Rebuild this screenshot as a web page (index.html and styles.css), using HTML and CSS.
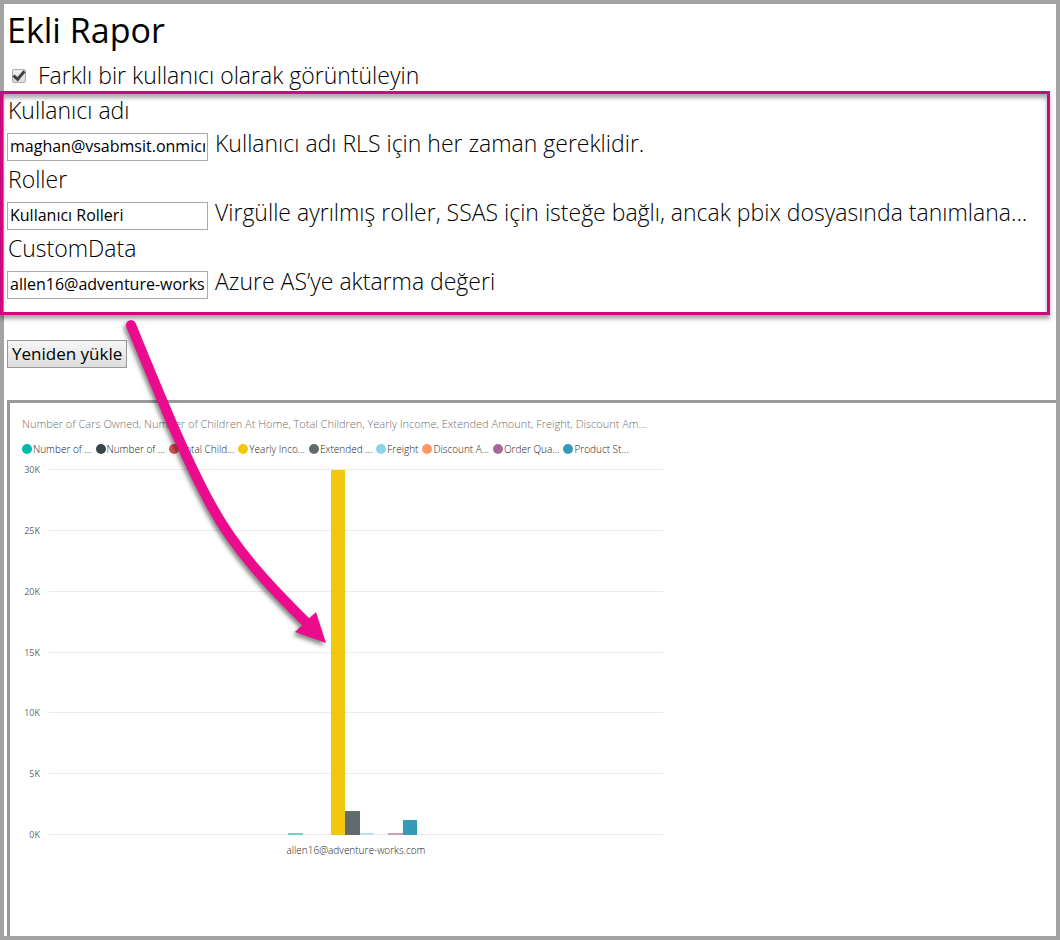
FILE: index.html
```html
<!DOCTYPE html>
<html lang="tr">
<head>
<meta charset="utf-8">
<title>Ekli Rapor</title>
<link rel="stylesheet" href="styles.css">
</head>
<body>
<main class="page">
  <h1 class="title">Ekli Rapor</h1>
  <label class="toggle"><input class="toggle-box" type="checkbox" checked><span>Farklı bir kullanıcı olarak görüntüleyin</span></label>

  <section class="identity">
    <label class="label" for="user">Kullanıcı adı</label>
    <div class="row">
      <input class="field" id="user" type="text" value="maghan@vsabmsit.onmicrosoft.com">
      <span class="hint">Kullanıcı adı RLS için her zaman gereklidir.</span>
    </div>
    <label class="label" for="roles">Roller</label>
    <div class="row">
      <input class="field" id="roles" type="text" value="Kullanıcı Rolleri">
      <span class="hint">Virgülle ayrılmış roller, SSAS için isteğe bağlı, ancak pbix dosyasında tanımlana...</span>
    </div>
    <label class="label" for="custom">CustomData</label>
    <div class="row">
      <input class="field" id="custom" type="text" value="allen16@adventure-works.com">
      <span class="hint">Azure AS’ye aktarma değeri</span>
    </div>
  </section>

  <button class="reload" type="button">Yeniden yükle</button>

  <section class="report">
    <h2 class="chart-title">Number of Cars Owned, Number of Children At Home, Total Children, Yearly Income, Extended Amount, Freight, Discount Am...</h2>
    <ul class="legend">
      <li class="key teal">Number of ...</li>
      <li class="key dark">Number of ...</li>
      <li class="key red">Total Child...</li>
      <li class="key yellow">Yearly Inco...</li>
      <li class="key gray">Extended ...</li>
      <li class="key sky">Freight</li>
      <li class="key orange">Discount A...</li>
      <li class="key purple">Order Qua...</li>
      <li class="key blue">Product St...</li>
    </ul>
    <svg class="plot" viewBox="0 0 641 400" role="img" aria-label="allen16@adventure-works.com">
      <g class="grid">
        <path d="M27 9.500H641M27 70.500H641M27 131.500H641M27 192.500H641M27 252.500H641M27 313.500H641M27 374.500H641"/>
      </g>
      <g class="axis">
        <text x="18" y="13">30K</text>
        <text x="18" y="74">25K</text>
        <text x="18" y="135">20K</text>
        <text x="18" y="196">15K</text>
        <text x="18" y="256">10K</text>
        <text x="18" y="317">5K</text>
        <text x="18" y="378">0K</text>
      </g>
      <rect x="266" y="373" width="15" height="2" fill="#6bd3c8"/>
      <rect x="309" y="10" width="14" height="365" fill="#f2c80f"/>
      <rect x="323" y="351" width="15" height="24" fill="#5f6b6d"/>
      <rect x="338" y="373" width="14" height="2" fill="#b9e2f0"/>
      <rect x="366" y="373" width="15" height="2" fill="#c9a0c3"/>
      <rect x="381" y="360" width="14" height="15" fill="#3599b8"/>
      <text class="category" x="334" y="394">allen16@adventure-works.com</text>
    </svg>
  </section>

  <svg class="arrow" viewBox="0 0 230 350" aria-hidden="true">
    <path d="M21 15C51 88 76 150 101 195C124 238 158 275 200 316" fill="none" stroke="#ec0a8d" stroke-width="10" stroke-linecap="round"/>
    <path d="M206 302L216 333L185 322Z" fill="#ec0a8d"/>
  </svg>
</main>
</body>
</html>
```
FILE: styles.css
```css
* {
  box-sizing: border-box;
}

body {
  margin: 0;
  background: #fff;
  color: #000;
  font-family: "Open Sans", "Noto Sans", sans-serif;
  font-weight: 300;
}

.page {
  position: relative;
  display: flex;
  flex-direction: column;
  min-height: 100vh;
  border: 4px solid #a3a3a3;
}

.title {
  margin: 0 3px;
  font-size: 34px;
  line-height: 52px;
  font-weight: 400;
}

.toggle {
  display: flex;
  align-items: center;
  gap: 12px;
  height: 35px;
  padding: 4px 8px 0;
  font-size: 23px;
  line-height: 31px;
}

.toggle-box {
  appearance: none;
  width: 14px;
  height: 14px;
  margin: 0;
  border: 1px solid #aaa;
  border-radius: 2px;
  background: linear-gradient(#f0f0f0, #dcdcdc);
  display: grid;
  place-items: center;
}

.toggle-box:checked::before {
  content: "";
  width: 9px;
  height: 4px;
  margin-bottom: 3px;
  border: solid #404040;
  border-width: 0 0 3px 3px;
  transform: rotate(-50deg);
}

.identity {
  position: relative;
  margin: 0 6px 0 -4px;
  padding: 0 0 11px 4px;
  border: 3px solid #cb0b7c;
  box-shadow: 0 4px 4px #0005, inset 0 4px 4px #0005;
  font-size: 23px;
}

.label {
  display: block;
  padding-left: 1px;
  line-height: 32px;
}

.row {
  display: flex;
  align-items: flex-start;
  gap: 7px;
  height: 37px;
}

.field {
  flex: none;
  width: 201px;
  height: 28px;
  margin-top: 7px;
  padding: 0 2px 2px;
  border: 1px solid #a9a9a9;
  background: #fff;
  color: #000;
  font: 400 16px "Open Sans", "Noto Sans", sans-serif;
}

.hint {
  line-height: 34px;
  white-space: nowrap;
}

.reload {
  align-self: flex-start;
  height: 28px;
  margin: 25px 3px 32px;
  padding: 0 4px 2px;
  border: 1px solid #999;
  background: linear-gradient(#f6f6f6, #dedede);
  color: #000;
  font: 400 17px "Open Sans", "Noto Sans", sans-serif;
}

.report {
  flex: 1;
  margin-left: 3px;
  padding: 13px 12px;
  border: solid #999;
  border-width: 3px 0 0 3px;
}

.chart-title {
  margin: 0;
  color: #707070;
  font-size: 11px;
  line-height: 16px;
  font-weight: 300;
  white-space: nowrap;
}

.legend {
  display: flex;
  gap: 4px;
  margin: 8px 0 0;
  padding: 0;
  list-style: none;
  color: #222;
  font-size: 10px;
  line-height: 18px;
  white-space: nowrap;
}

.key {
  display: flex;
  align-items: center;
  gap: 1px;
}

.key::before {
  content: "";
  width: 10px;
  height: 10px;
  border-radius: 50%;
  background: currentColor;
}

.teal::before { background: #01b8aa; }
.dark::before { background: #374649; }
.red::before { background: #d9534f; }
.yellow::before { background: #f2c80f; }
.gray::before { background: #5f6b6d; }
.sky::before { background: #8ad4eb; }
.orange::before { background: #fe9666; }
.purple::before { background: #a66999; }
.blue::before { background: #3599b8; }

.plot {
  display: block;
  width: 641px;
  max-width: 100%;
  margin-top: 2px;
  font-size: 10px;
}

.grid {
  stroke: #eaeaea;
}

.axis {
  fill: #666;
  font-size: 9px;
  font-weight: 400;
  text-anchor: end;
}

.category {
  fill: #222;
  text-anchor: middle;
}

.arrow {
  position: absolute;
  left: 106px;
  top: 306px;
  width: 230px;
  pointer-events: none;
  filter: drop-shadow(-2px 3px 2px #0007);
}
```
